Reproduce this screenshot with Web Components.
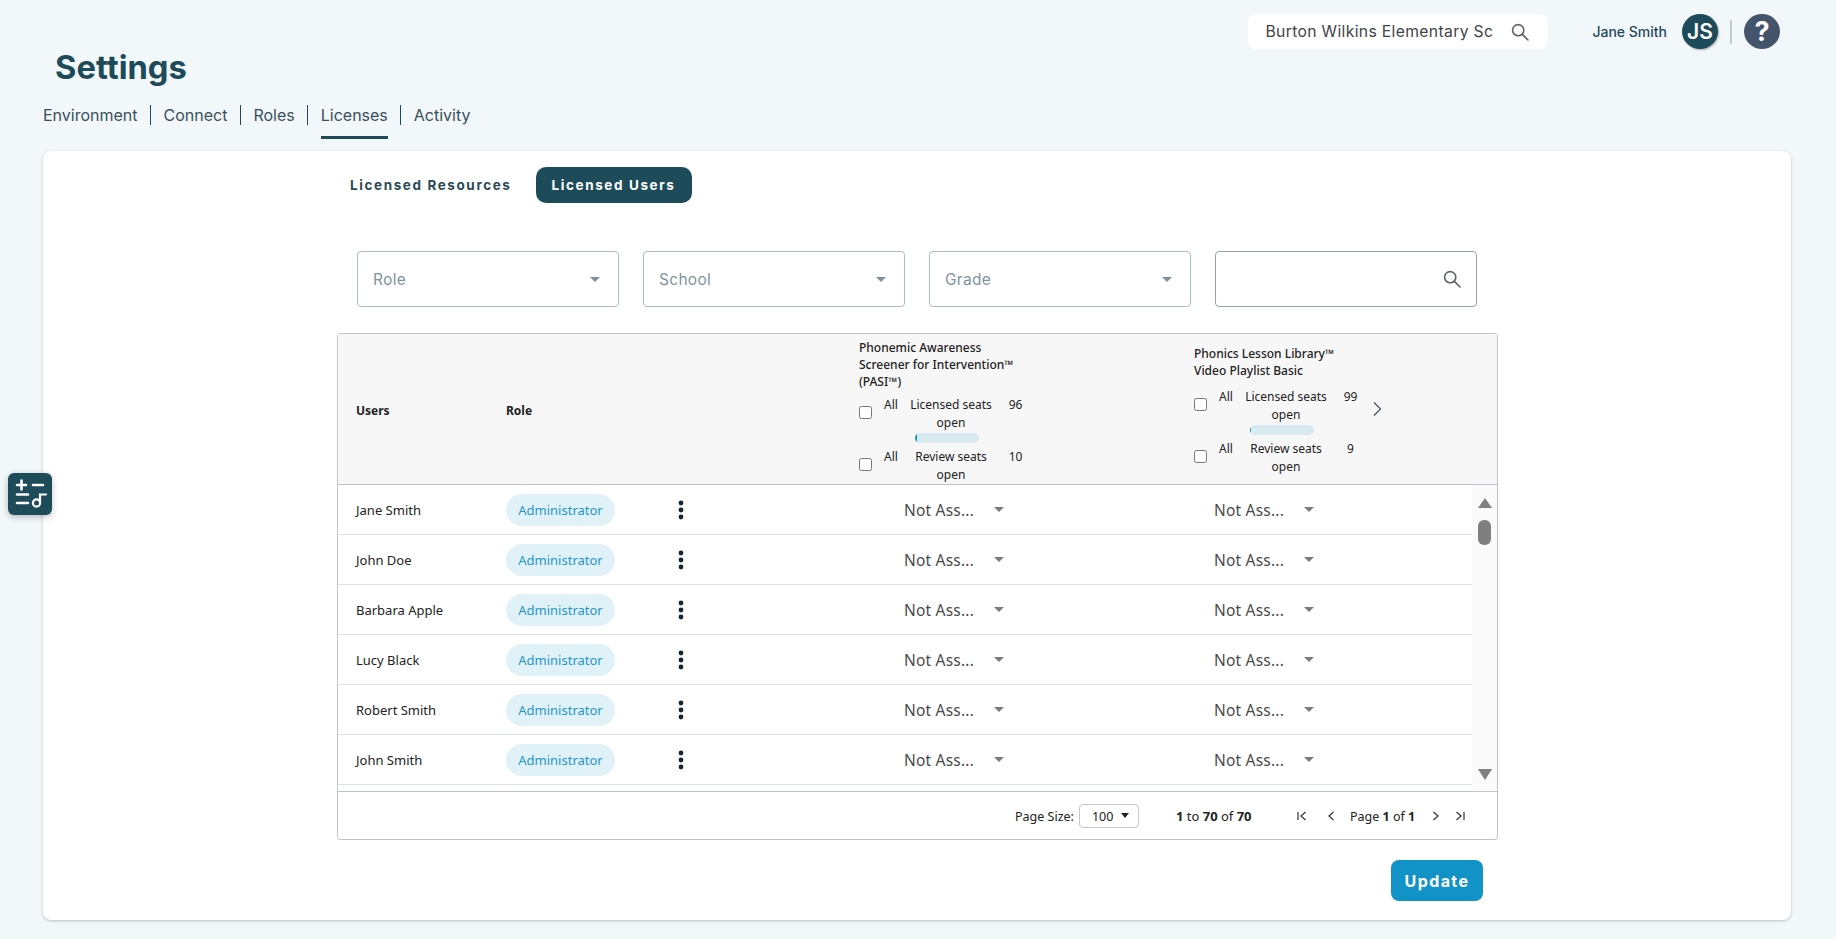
<!DOCTYPE html>
<html>
<head>
<meta charset="utf-8">
<title>Settings</title>
<style>
  html, body { margin: 0; height: 939px; overflow: hidden; background: #f2f7fa; }
  body { font-family: "Inter", sans-serif; color: #1d4b5a; }
</style>
</head>
<body>
<top-bar></top-bar>
<page-title>Settings</page-title>
<nav-tabs></nav-tabs>
<settings-card></settings-card>
<tool-button></tool-button>

<script>
const searchIcon = (size, color) => `<svg width="${size}" height="${size}" viewBox="0 0 18 18" fill="none" stroke="${color}" stroke-width="1.6"><circle cx="7.2" cy="7.2" r="5.6"/><path d="M11.4 11.4 L17 17" stroke-linecap="round"/></svg>`;

class TopBar extends HTMLElement {
    constructor() {
        super();
        this.shadowDOM = this.attachShadow({mode: "open"});
    }

    connectedCallback() {
        this.shadowDOM.innerHTML = `
        <style>
        :host { display: flex; align-items: center; height: 35px; padding: 14px 56px 0 0; justify-content: flex-end; }
        .search { width: 300px; height: 35px; box-sizing: border-box; padding: 0 19px 0 17px; background: #fff; border-radius: 8px; display: flex; align-items: center; justify-content: space-between; }
        .search span { white-space: nowrap; font-size: 15.7px; color: #3f4448; letter-spacing: .35px; }
        .search svg { display: block; }
        .name { margin-left: 44px; font-size: 14px; font-weight: 500; color: #24495a; white-space: nowrap; }
        .avatar, .help { width: 36px; height: 35px; border-radius: 50%; color: #fff; display: flex; align-items: center; justify-content: center; }
        .avatar { margin-left: 15px; background: #1d4b5a; font-size: 21px; font-weight: 600; box-shadow: 1px 1px 2px rgba(0,0,0,.3); }
        .sep { width: 2px; height: 24px; margin: 0 12px; background: #c3cbd0; }
        .help { background: #44546a; font-size: 27px; font-weight: 700; }
        </style>
        <div class="search"><span>Burton Wilkins Elementary Sc</span>${searchIcon(18, "#5f6368")}</div>
        <div class="name">Jane Smith</div>
        <div class="avatar">JS</div>
        <div class="sep"></div>
        <div class="help">?</div>
        `;
    }
}

class PageTitle extends HTMLElement {
    constructor() {
        super();
        this.attachShadow({mode: "open"}).innerHTML = `
        <style>
        :host { display: block; height: 46px; padding-left: 55px; margin-top: -3px; font-size: 32.7px; line-height: 42px; font-weight: 700; color: #1d4b5a; }
        </style>
        <slot></slot>
        `;
    }
}

class NavTabs extends HTMLElement {
    constructor() {
        super();
        this.attachShadow({mode: "open"}).innerHTML = `
        <style>
        :host { display: flex; height: 59px; margin-left: 43px; padding-top: 13px; box-sizing: border-box; }
        a { display: block; height: 20px; line-height: 20px; font-size: 16px; color: #38505c; position: relative; padding-right: 12.5px; margin-right: 12.5px; border-right: 1px solid #1d4b5a; }
        a:last-child { border-right: 0; }
        a.on::after { content: ""; position: absolute; left: 0; right: 12.5px; top: 31px; height: 3px; background: #1d4b5a; }
        </style>
        <a>Environment</a><a>Connect</a><a>Roles</a><a class="on">Licenses</a><a>Activity</a>
        `;
    }
}

class FilterSelect extends HTMLElement {
    constructor() {
        super();
        this.attachShadow({mode: "open"}).innerHTML = `
        <style>
        :host { display: flex; align-items: center; justify-content: space-between; width: 262px; height: 56px; box-sizing: border-box; padding: 0 18px 0 15px; border: 1px solid #a9bcc4; border-radius: 4px; font-size: 15.5px; color: #7d949e; letter-spacing: .3px; }
        i { width: 0; height: 0; border-left: 5px solid transparent; border-right: 5px solid transparent; border-top: 5px solid #7d8f98; }
        </style>
        <slot></slot><i></i>
        `;
    }
}

class SearchField extends HTMLElement {
    constructor() {
        super();
        this.attachShadow({mode: "open"}).innerHTML = `
        <style>
        :host { display: flex; align-items: center; justify-content: flex-end; width: 262px; height: 56px; box-sizing: border-box; padding-right: 15px; border: 1px solid #98a2a9; border-radius: 4px; }
        svg { display: block; }
        </style>
        ${searchIcon(18, "#5f6368")}
        `;
    }
}

class SeatGroup extends HTMLElement {
    constructor() {
        super();
        this.shadowDOM = this.attachShadow({mode: "open"});
    }

    connectedCallback() {
        const fill = this.getAttribute("fill") || 0;
        const gap = this.getAttribute("gap") || 6;
        this.shadowDOM.innerHTML = `
        <style>
        :host { display: block; width: 190px; font-family: "Noto Sans", sans-serif; font-size: 12px; line-height: 17.5px; color: #222; }
        .title { font-weight: 500; line-height: 17px; width: 165px; margin-bottom: ${gap}px; }
        .seat { display: flex; height: 35px; }
        .box { width: 13px; height: 13px; box-sizing: border-box; margin-top: 10px; border: 1px solid #767676; border-radius: 2.5px; background: #fff; }
        .all { margin-left: 12px; width: 20px; }
        .label { width: 92px; margin-left: 1px; text-align: center; }
        .num { width: 30px; margin-left: 1px; text-align: center; padding-left: 5px; box-sizing: border-box; }
        .bar { width: 64px; height: 10px; margin: 2px 0 5px 56px; background: #d8e9f0; border-radius: 5px; overflow: hidden; }
        .bar b { display: block; width: ${fill}px; height: 10px; background: #1193c7; }
        </style>
        <div class="title">${this.getAttribute("name")}</div>
        <div class="seat"><div class="box"></div><div class="all">All</div><div class="label">Licensed seats open</div><div class="num">${this.getAttribute("licensed")}</div></div>
        <div class="bar"><b></b></div>
        <div class="seat"><div class="box"></div><div class="all">All</div><div class="label">Review seats open</div><div class="num">${this.getAttribute("review")}</div></div>
        `;
    }
}

class UserRow extends HTMLElement {
    constructor() {
        super();
        this.shadowDOM = this.attachShadow({mode: "open"});
    }

    connectedCallback() {
        const assign = `<span class="assign"><span>Not Ass...</span><i></i></span>`;
        this.shadowDOM.innerHTML = `
        <style>
        :host { display: grid; grid-template-columns: 168px 166px 232px 310px 1fr; align-items: center; height: 50px; box-sizing: border-box; border-bottom: 1px solid #dde3ea; }
        .user { padding-left: 18px; font-family: "Noto Sans", sans-serif; font-size: 13px; color: #222; }
        .badge { width: 109px; height: 32px; line-height: 32px; text-align: center; border-radius: 16px; background: #e1f1f8; color: #1e97c9; font-size: 13px; }
        .dots { display: block; margin-left: 3px; }
        .assign { display: flex; align-items: center; font-size: 15.5px; color: #4a4a4a; letter-spacing: .2px; }
        .assign span { width: 90px; white-space: nowrap; }
        .assign i { width: 0; height: 0; border-left: 5px solid transparent; border-right: 5px solid transparent; border-top: 5px solid #7b7b7b; }
        </style>
        <div class="user">${this.getAttribute("name")}</div>
        <div><div class="badge">Administrator</div></div>
        <svg class="dots" width="12" height="20" viewBox="0 0 12 20" fill="#16262e"><circle cx="6" cy="3" r="2.4"/><circle cx="6" cy="10" r="2.4"/><circle cx="6" cy="17" r="2.4"/></svg>
        ${assign}
        ${assign}
        `;
    }
}

class UsersTable extends HTMLElement {
    constructor() {
        super();
        this.shadowDOM = this.attachShadow({mode: "open"});
    }

    connectedCallback() {
        const names = ["Jane Smith", "John Doe", "Barbara Apple", "Lucy Black", "Robert Smith", "John Smith"];
        this.shadowDOM.innerHTML = `
        <style>
        :host { display: block; width: 1161px; height: 507px; box-sizing: border-box; margin-left: 294px; border: 1px solid #bfc4cc; border-radius: 3px; background: #fff; font-family: "Noto Sans", sans-serif; color: #222; }
        .head { display: grid; grid-template-columns: 168px 353px 335px 1fr; align-items: center; height: 151px; box-sizing: border-box; background: #f7f7f7; border-bottom: 1px solid #bfc4cc; font-size: 12px; }
        .head > b { font-weight: 700; padding-top: 2px; }
        .head > b.users { padding-left: 18px; }
        .second { display: flex; align-items: center; }
        .second seat-group { padding-top: 2px; }
        .next { display: block; margin-left: -12px; }
        .first-col { padding-top: 4px; }
        .body { display: flex; height: 306px; overflow: hidden; border-bottom: 1px solid #bfc4cc; }
        .rows { width: 1134px; }
        .scroll { flex: 1; background: #fafafa; position: relative; display: flex; flex-direction: column; align-items: flex-start; padding: 13px 0 11px 6px; }
        .scroll i { width: 0; height: 0; border-left: 7px solid transparent; border-right: 7px solid transparent; }
        .up { border-bottom: 10px solid #808080; }
        .down { border-top: 11px solid #808080; margin-top: auto; }
        .thumb { width: 13px; height: 25px; margin-top: 12px; border-radius: 6px; background: #7f7f7f; }
        .foot { display: flex; align-items: center; height: 48px; padding-left: 677px; font-size: 12.5px; color: #222; white-space: nowrap; }
        .size { display: flex; align-items: center; justify-content: space-between; width: 60px; height: 24px; box-sizing: border-box; margin-left: 5px; padding: 0 9px 0 12px; border: 1px solid #c4c7ce; border-radius: 4px; }
        .size i { width: 0; height: 0; border-left: 4.5px solid transparent; border-right: 4.5px solid transparent; border-top: 5px solid #222; margin-top: -2px; }
        .count { margin-left: 37px; width: 121px; font-size: 13px; }
        .foot svg { display: block; }
        .page { width: 65px; margin: 0 16px 0 14px; }
        </style>
        <div class="head">
            <b class="users">Users</b>
            <b>Role</b>
            <seat-group class="first-col" name="Phonemic Awareness Screener for Intervention™ (PASI™)" licensed="96" review="10" fill="2"></seat-group>
            <div class="second">
                <seat-group gap="9" name="Phonics Lesson Library™ Video Playlist Basic" licensed="99" review="9" fill="1"></seat-group>
                <svg class="next" width="10" height="16" viewBox="0 0 10 16" fill="none" stroke="#44505a" stroke-width="1.2"><path d="M2 1.5 L8.5 8 L2 14.5"/></svg>
            </div>
        </div>
        <div class="body">
            <div class="rows">${names.map(n => `<user-row name="${n}"></user-row>`).join("")}</div>
            <div class="scroll"><i class="up"></i><div class="thumb"></div><i class="down"></i></div>
        </div>
        <div class="foot">
            <span>Page Size:</span>
            <span class="size">100<i></i></span>
            <span class="count"><b>1</b> to <b>70</b> of <b>70</b></span>
            <svg width="10" height="10" viewBox="0 0 10 10" fill="none" stroke="#333" stroke-width="1.2" style="margin-right:19px"><path d="M1 1 V9 M8.5 1 L4 5 L8.5 9"/></svg>
            <svg width="10" height="10" viewBox="0 0 10 10" fill="none" stroke="#333" stroke-width="1.2"><path d="M7.5 1 L3 5 L7.5 9"/></svg>
            <span class="page">Page <b>1</b> of <b>1</b></span>
            <svg width="10" height="10" viewBox="0 0 10 10" fill="none" stroke="#333" stroke-width="1.2" style="margin-right:14px"><path d="M2.5 1 L7 5 L2.5 9"/></svg>
            <svg width="10" height="10" viewBox="0 0 10 10" fill="none" stroke="#333" stroke-width="1.2"><path d="M9 1 V9 M1.5 1 L6 5 L1.5 9"/></svg>
        </div>
        `;
    }
}

class SettingsCard extends HTMLElement {
    constructor() {
        super();
        this.shadowDOM = this.attachShadow({mode: "open"});
    }

    connectedCallback() {
        this.shadowDOM.innerHTML = `
        <style>
        :host { display: block; width: 1748px; height: 769px; box-sizing: border-box; margin-left: 43px; padding-top: 16px; background: #fff; border-radius: 8px; box-shadow: 0 1px 3px rgba(60,70,80,.3); }
        .switch { display: flex; align-items: center; height: 36px; padding-left: 307px; font-size: 13.5px; font-weight: 700; letter-spacing: 1.6px; color: #2a4a57; }
        .active { margin-left: 24px; width: 156px; height: 36px; line-height: 36px; text-align: center; background: #1d4b5a; color: #fff; border-radius: 10px; }
        .filters { display: flex; gap: 24px; margin: 48px 0 26px 314px; }
        .actions { display: flex; justify-content: flex-end; padding: 20px 308px 0 0; }
        button { width: 92px; height: 41px; border: 0; border-radius: 8px; background: #1193c7; color: #fff; font: 700 16px "Inter", sans-serif; letter-spacing: 1.4px; }
        </style>
        <div class="switch"><span>Licensed Resources</span><span class="active">Licensed Users</span></div>
        <div class="filters">
            <filter-select>Role</filter-select>
            <filter-select>School</filter-select>
            <filter-select>Grade</filter-select>
            <search-field></search-field>
        </div>
        <users-table></users-table>
        <div class="actions"><button>Update</button></div>
        `;
    }
}

class ToolButton extends HTMLElement {
    constructor() {
        super();
        this.attachShadow({mode: "open"}).innerHTML = `
        <style>
        :host { position: absolute; left: 8px; top: 473px; width: 44px; height: 42px; background: #1d4b5a; border-radius: 6px; box-shadow: 0 2px 6px rgba(0,0,0,.25); }
        svg { display: block; }
        </style>
        <svg width="44" height="42" viewBox="0 0 44 42" fill="none" stroke="#fff" stroke-width="2.6" stroke-linecap="round">
            <path d="M9 12 H18 M13.5 7.5 V16.5 M25 12 H35 M9 21.5 H20 M9 30 H20"/>
            <circle cx="28.5" cy="30" r="3.6" stroke-width="2.2"/>
            <path d="M32 30 V21.5 H38" stroke-width="2.2"/>
        </svg>
        `;
    }
}

customElements.define("top-bar", TopBar);
customElements.define("page-title", PageTitle);
customElements.define("nav-tabs", NavTabs);
customElements.define("filter-select", FilterSelect);
customElements.define("search-field", SearchField);
customElements.define("seat-group", SeatGroup);
customElements.define("user-row", UserRow);
customElements.define("users-table", UsersTable);
customElements.define("settings-card", SettingsCard);
customElements.define("tool-button", ToolButton);
</script>
</body>
</html>
